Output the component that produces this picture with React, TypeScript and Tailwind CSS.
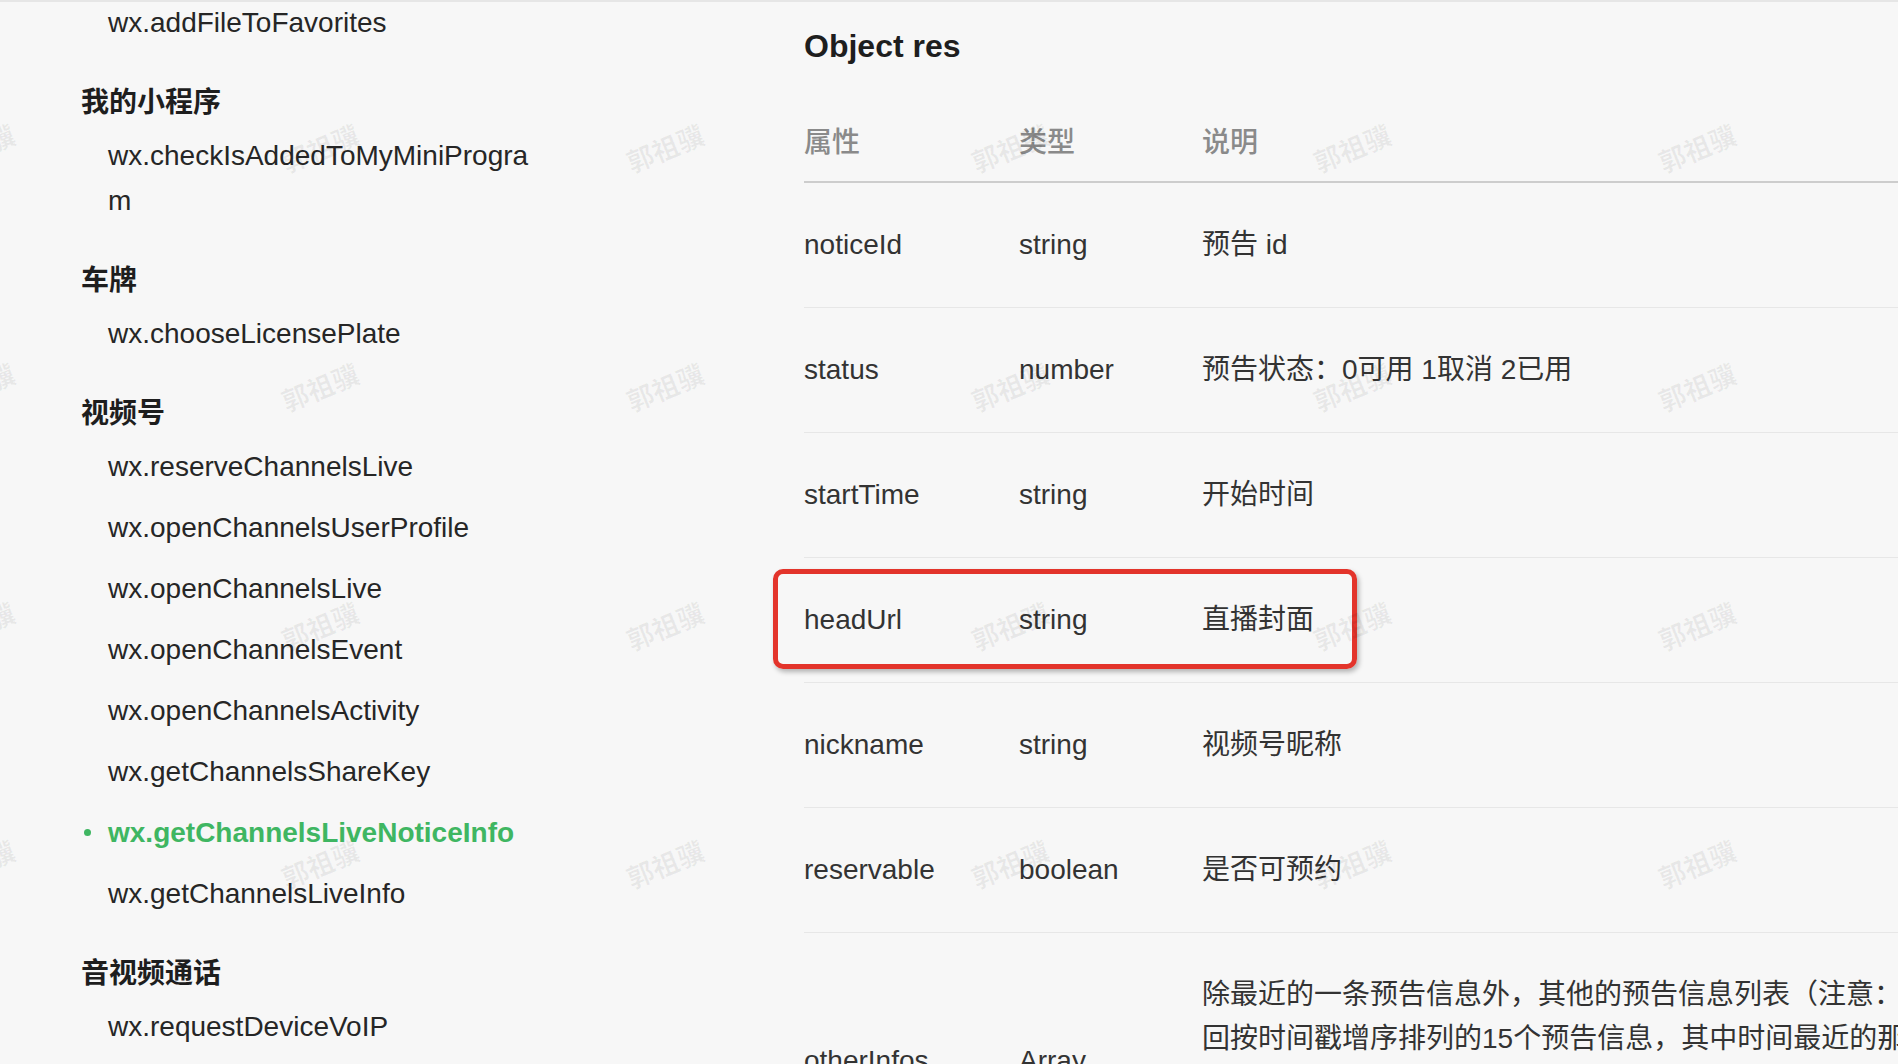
const groups: { title: string | null; items: string[] }[] = [
  { title: null, items: ['wx.addFileToFavorites'] },
  { title: '我的小程序', items: ['wx.checkIsAddedToMyMiniProgram'] },
  { title: '车牌', items: ['wx.chooseLicensePlate'] },
  {
    title: '视频号',
    items: [
      'wx.reserveChannelsLive',
      'wx.openChannelsUserProfile',
      'wx.openChannelsLive',
      'wx.openChannelsEvent',
      'wx.openChannelsActivity',
      'wx.getChannelsShareKey',
      'wx.getChannelsLiveNoticeInfo',
      'wx.getChannelsLiveInfo',
    ],
  },
  { title: '音视频通话', items: ['wx.requestDeviceVoIP', 'wx.getDeviceVoIPList'] },
];

const active = 'wx.getChannelsLiveNoticeInfo';

const rows = [
  { name: 'noticeId', type: 'string', desc: '预告 id' },
  { name: 'status', type: 'number', desc: '预告状态：0可用 1取消 2已用' },
  { name: 'startTime', type: 'string', desc: '开始时间' },
  { name: 'headUrl', type: 'string', desc: '直播封面', marked: true },
  { name: 'nickname', type: 'string', desc: '视频号昵称' },
  { name: 'reservable', type: 'boolean', desc: '是否可预约' },
  {
    name: 'otherInfos',
    type: 'Array',
    desc: '除最近的一条预告信息外，其他的预告信息列表（注意：每次最多返回按时间戳增序排列的15个预告信息，其中时间最近的那个预告信息会在返回值中的 noticeId、status、startTime、headUrl、nickname、reservable 字段中返回）',
  },
];

// watermark grid centers
const wmX = [-23, 321, 666, 1011, 1353, 1698];
const wmY = [148, 387, 626, 864];

function Sidebar() {
  return (
    <aside className="w-[764px] shrink-0 -mt-[10px] pl-[81px]">
      {groups.map((g, i) => (
        <div key={i} className={i > 0 ? 'mt-[27px]' : ''}>
          {g.title && (
            <h3 className="text-[28px] leading-[45px] font-semibold text-[#1e1e1e]">{g.title}</h3>
          )}
          {g.items.map((it) => {
            const on = it === active;
            return (
              <div key={it} className="flex py-2">
                <div className="flex h-[45px] w-[27px] shrink-0 items-center">
                  {on && <span className="ml-[3px] size-[7px] rounded-full bg-[#3fb662]" />}
                </div>
                <span
                  className={
                    'w-[430px] break-all text-[28px] leading-[45px] ' +
                    (on ? 'font-semibold text-[#3fb662]' : 'text-[#262626]')
                  }
                >
                  {it}
                </span>
              </div>
            );
          })}
        </div>
      ))}
    </aside>
  );
}

function ResTable() {
  return (
    <div className="w-[1300px]">
      <div className="grid h-[82px] grid-cols-[215px_183px_880px] items-center border-b-2 border-[#cdcdcd] pt-[4px] text-[28px] font-medium text-[#8a8a8a]">
        <div>属性</div>
        <div>类型</div>
        <div>说明</div>
      </div>
      {rows.map((r) => (
        <div
          key={r.name}
          className="relative grid grid-cols-[215px_183px_880px] items-center border-b border-[#e7e7e7] py-[40px] text-[28px] leading-[44px] text-[#333]"
        >
          <div>{r.name}</div>
          <div>{r.type}</div>
          <div className="w-[845px]">{r.desc}</div>
          {r.marked && (
            <div className="pointer-events-none absolute top-[11px] left-[-31px] h-[100px] w-[584px] rounded-[10px] border-[5px] border-[#e3342b] shadow-[2px_3px_5px_rgba(0,0,0,0.28)]" />
          )}
        </div>
      ))}
    </div>
  );
}

export default function App() {
  return (
    <div className="relative h-[1064px] w-[1898px] overflow-hidden border-t-2 border-[#e6e6e6] bg-[#f7f7f7] [font-family:'Liberation_Sans','Noto_Sans_CJK_SC',sans-serif]">
      <div className="flex">
        <Sidebar />
        <main className="min-w-0 flex-1 overflow-hidden pl-[40px]">
          <h2 className="mt-[22px] mb-[33px] text-[32px] leading-[44px] font-bold text-[#1e1e1e]">Object res</h2>
          <ResTable />
        </main>
      </div>

      {/* watermark layer */}
      <div className="pointer-events-none absolute inset-0">
        {wmY.map((y) =>
          wmX.map((x) => (
            <span
              key={x + '-' + y}
              className="absolute -translate-x-1/2 -translate-y-1/2 -rotate-[22deg] text-[27px] font-semibold text-[rgba(0,0,0,0.06)]"
              style={{ left: x, top: y }}
            >
              郭祖骥
            </span>
          ))
        )}
      </div>
    </div>
  );
}
